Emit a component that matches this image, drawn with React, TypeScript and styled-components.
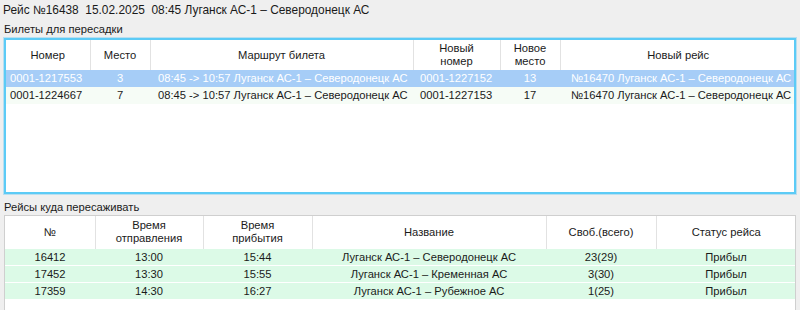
import styled, { createGlobalStyle } from 'styled-components';

const GlobalStyle = createGlobalStyle`
  html, body {
    margin: 0;
    padding: 0;
    background: #efefef;
    font-family: 'Liberation Sans', 'Noto Sans', sans-serif;
    font-size: 11.2px;
    color: #1a1a1a;
  }
`;

const Page = styled.div`
  width: 800px;
  height: 310px;
  overflow: hidden;
  padding: 2px 4px 0 3px;
  box-sizing: border-box;
`;

const Title = styled.div`
  white-space: pre;
  font-size: 11.9px;
  height: 16px;
  line-height: 16px;
`;

const Caption = styled.div<{ $gap: number }>`
  height: 16px;
  line-height: 16px;
  margin-top: ${(p) => p.$gap}px;
  margin-left: 1px;
`;

const Panel = styled.div<{ $focused?: boolean; $height: number }>`
  margin-left: 1px;
  height: ${(p) => p.$height}px;
  background: #fff;
  box-sizing: border-box;
  border: ${(p) => (p.$focused ? '2px solid #5ccbf6' : '1px solid #cfcfcf')};
  outline: ${(p) => (p.$focused ? '1px solid #b9dff0' : 'none')};
  overflow: hidden;
`;

const Table = styled.table`
  width: 100%;
  border-collapse: collapse;
  table-layout: fixed;
`;

const Th = styled.th<{ $h: number }>`
  font-weight: normal;
  text-align: center;
  height: ${(p) => p.$h}px;
  padding: 0 4px;
  line-height: 13px;
  border-left: 1px solid #e2e2e2;
  &:first-child {
    border-left: none;
  }
`;

const Row = styled.tr<{ $selected?: boolean; $tint: string }>`
  background: ${(p) => (p.$selected ? '#a6cdf7' : p.$tint)};
  color: ${(p) => (p.$selected ? '#fff' : '#1a1a1a')};
`;

const Td = styled.td<{ $align?: 'left' | 'center'; $pad?: number }>`
  text-align: ${(p) => p.$align || 'center'};
  height: 17px;
  line-height: 15px;
  padding: 0 4px 0 ${(p) => p.$pad ?? 4}px;
  white-space: nowrap;
  overflow: hidden;
`;

const GreenTd = styled(Td)`
  height: 16px;
  border-top: 1px solid #fff;
`;

const tickets = [
  ['0001-1217553', '3', '08:45 -> 10:57 Луганск АС-1 – Северодонецк АС', '0001-1227152', '13', '№16470 Луганск АС-1 – Северодонецк АС'],
  ['0001-1224667', '7', '08:45 -> 10:57 Луганск АС-1 – Северодонецк АС', '0001-1227153', '17', '№16470 Луганск АС-1 – Северодонецк АС'],
];

const ticketCols = [84, 60, 263, 87, 60, 236];
const ticketAlign: ('left' | 'center')[] = ['left', 'center', 'left', 'left', 'center', 'left'];
const ticketPad = [4, 4, 8, 7, 4, 11];

const trips = [
  ['16412', '13:00', '15:44', 'Луганск АС-1 – Северодонецк АС', '23(29)', 'Прибыл'],
  ['17452', '13:30', '15:55', 'Луганск АС-1 – Кременная АС', '3(30)', 'Прибыл'],
  ['17359', '14:30', '16:27', 'Луганск АС-1 – Рубежное АС', '1(25)', 'Прибыл'],
];

const tripCols = [90, 108, 109, 234, 110, 140];

const App = () => {
  return (
    <>
      <GlobalStyle />
      <Page>
        <Title>Рейс №16438  15.02.2025  08:45 Луганск АС-1 – Северодонецк АС</Title>
        <Caption $gap={3}>Билеты для пересадки</Caption>
        <Panel $focused $height={156} style={{ marginTop: 1 }}>
          <Table>
            <colgroup>
              {ticketCols.map((w, i) => (
                <col key={i} style={{ width: w }} />
              ))}
            </colgroup>
            <thead>
              <tr>
                <Th $h={30}>Номер</Th>
                <Th $h={30}>Место</Th>
                <Th $h={30}>Маршрут билета</Th>
                <Th $h={30}>Новый<br />номер</Th>
                <Th $h={30}>Новое<br />место</Th>
                <Th $h={30}>Новый рейс</Th>
              </tr>
            </thead>
            <tbody>
              {tickets.map((row, i) => (
                <Row key={i} $selected={i === 0} $tint="#f6fcf6">
                  {row.map((cell, j) => (
                    <Td key={j} $align={ticketAlign[j]} $pad={ticketPad[j]}>
                      {cell}
                    </Td>
                  ))}
                </Row>
              ))}
            </tbody>
          </Table>
        </Panel>
        <Caption $gap={5}>Рейсы куда пересаживать</Caption>
        <Panel $height={100}>
          <Table>
            <colgroup>
              {tripCols.map((w, i) => (
                <col key={i} style={{ width: w }} />
              ))}
            </colgroup>
            <thead>
              <tr>
                <Th $h={32}>№</Th>
                <Th $h={32}>Время<br />отправления</Th>
                <Th $h={32}>Время<br />прибытия</Th>
                <Th $h={32}>Название</Th>
                <Th $h={32}>Своб.(всего)</Th>
                <Th $h={32}>Статус рейса</Th>
              </tr>
            </thead>
            <tbody>
              {trips.map((row, i) => (
                <Row key={i} $tint="#dcfae7">
                  {row.map((cell, j) => (
                    <GreenTd key={j}>{cell}</GreenTd>
                  ))}
                </Row>
              ))}
            </tbody>
          </Table>
        </Panel>
      </Page>
    </>
  );
};

export default App;
